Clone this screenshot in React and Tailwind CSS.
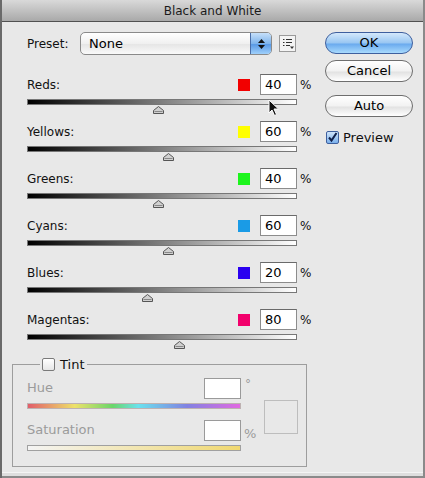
import { useState } from 'react'

const channels = [
  { name: 'Reds:', color: 'bg-[#f20000]', value: 40 },
  { name: 'Yellows:', color: 'bg-[#ffff00]', value: 60 },
  { name: 'Greens:', color: 'bg-[#1cf51c]', value: 40 },
  { name: 'Cyans:', color: 'bg-[#1a9be6]', value: 60 },
  { name: 'Blues:', color: 'bg-[#2a00f0]', value: 20 },
  { name: 'Magentas:', color: 'bg-[#f2006c]', value: 80 },
]

const Thumb = ({ pct }) => (
  <svg
    className="absolute top-[6px]"
    style={{ left: `${pct * 270 - 5}px` }}
    width="11"
    height="8"
    viewBox="0 0 11 8"
  >
    <path d="M5.5 0.5 L10.5 4.5 L10.5 7.5 L0.5 7.5 L0.5 4.5 Z" fill="#d0d0d0" stroke="#555" strokeWidth="1" />
    <path d="M1.5 5.5 L9.5 5.5" stroke="#888" strokeWidth="1" />
  </svg>
)

const ChannelRow = ({ channel }) => {
  const pct = (channel.value + 200) / 500
  return (
    <div className="mt-[16px] first:mt-0 w-[285px]">
      <div className="flex items-center h-[21px]">
        <span className="flex-1 text-[12px] text-[#111]">{channel.name}</span>
        <span className={`w-[12px] h-[12px] ${channel.color}`}></span>
        <div className="ml-[10px] w-[37px] h-[21px] bg-white border border-[#8c8c8c] border-t-[#6a6a6a] pl-[4px] text-[13px] leading-[19px] text-black">
          {channel.value}
        </div>
        <span className="ml-[3px] w-[12px] text-[12px] text-[#111]">%</span>
      </div>
      <div className="relative mt-[4px] w-[270px] h-[6px] border border-[#777] bg-[linear-gradient(to_right,#000,#fff)]">
        <Thumb pct={pct} />
      </div>
    </div>
  )
}

const MacButton = ({ children, primary }) => (
  <button
    className={`block w-[88px] h-[22px] rounded-full border text-[13px] leading-[20px] text-black ${
      primary
        ? 'border-[#3e5f9e] bg-[linear-gradient(to_bottom,#d4e8fb_0%,#98c6f2_50%,#6aaaee_55%,#a8dafd_100%)]'
        : 'border-[#6e6e6e] bg-[linear-gradient(to_bottom,#ffffff_0%,#f2f2f2_50%,#e2e2e2_55%,#ffffff_100%)]'
    }`}
  >
    {children}
  </button>
)

export default function App() {
  const [preview, setPreview] = useState(true)

  return (
    <div className="w-[425px] h-[478px] bg-[#e8e8e8] border-l-[2px] border-l-[#6a6a6a] border-r-[2px] border-r-[#8a8a8a] flex flex-col font-['DejaVu_Sans',sans-serif] relative overflow-hidden">
      {/* title bar */}
      <div className="h-[22px] shrink-0 flex items-center justify-center bg-[linear-gradient(to_bottom,#d9d9d9,#a9a9a9)] border-b border-[#515151] text-[12px] text-[#1a1a1a]">
        Black and White
      </div>

      <div className="flex flex-1">
        {/* left column */}
        <div className="w-[321px] shrink-0">
          {/* preset */}
          <div className="flex items-center h-[23px] mt-[10px] ml-[25px]">
            <span className="text-[12px] text-[#111] w-[53px]">Preset:</span>
            <div className="w-[192px] h-[23px] rounded-[5px] border border-[#8a8a8a] flex overflow-hidden bg-[linear-gradient(to_bottom,#ffffff,#f0f0f0_50%,#e6e6e6_55%,#fafafa)]">
              <span className="flex-1 pl-[8px] text-[13px] leading-[21px] text-black">None</span>
              <div className="w-[21px] h-full border-l border-[#4a6ea8] flex flex-col items-center justify-center gap-[2px] bg-[linear-gradient(to_bottom,#c6e0fa,#7fb4ec_50%,#5a9ae6_55%,#9fd0fb)]">
                <svg width="7" height="4" viewBox="0 0 7 4"><path d="M3.5 0 L7 4 L0 4 Z" fill="#111" /></svg>
                <svg width="7" height="4" viewBox="0 0 7 4"><path d="M0 0 L7 0 L3.5 4 Z" fill="#111" /></svg>
              </div>
            </div>
            <div className="ml-[7px] w-[17px] h-[17px] border border-[#9a9a9a] bg-[#f4f4f4] flex items-center justify-center">
              <svg width="12" height="11" viewBox="0 0 12 11">
                <path d="M1 1.5h1.5M4 1.5h6M1 4.5h1.5M4 4.5h6M1 7.5h1.5M4 7.5h4" stroke="#333" strokeWidth="1" />
                <path d="M8 8.5h4l-2 2.5z" fill="#333" />
              </svg>
            </div>
          </div>

          {/* channels */}
          <div className="mt-[19px] ml-[25px]">
            {channels.map((c) => (
              <ChannelRow key={c.name} channel={c} />
            ))}
          </div>

          {/* tint */}
          <fieldset className="mt-[15px] ml-[10px] w-[295px] h-[112px] border border-[#9d9d9d] pl-[14px] pt-[3px]">
            <legend className="ml-[13px] px-[2px] flex items-center gap-[5px] text-[13px] text-[#111]">
              <span className="w-[13px] h-[13px] border border-[#7a7a7a] rounded-[2px] bg-[linear-gradient(to_bottom,#fff,#e6e6e6)]"></span>
              Tint
            </legend>
            <div className="flex">
              <div className="w-[214px]">
                <div className="flex items-center h-[21px]">
                  <span className="flex-1 text-[13px] text-[#9b9b9b]">Hue</span>
                  <div className="w-[37px] h-[21px] bg-white border border-[#9a9a9a]"></div>
                </div>
                <div className="mt-[4px] h-[6px] border border-[#b0a0a0] opacity-75 bg-[linear-gradient(to_right,#e03040,#f0e040_22%,#40d040_40%,#40e0f0_52%,#6060e0_75%,#e040e0)]"></div>
                <div className="flex items-center h-[21px] mt-[11px]">
                  <span className="flex-1 text-[13px] text-[#9b9b9b]">Saturation</span>
                  <div className="w-[37px] h-[21px] bg-white border border-[#9a9a9a]"></div>
                </div>
                <div className="mt-[4px] h-[6px] border border-[#a0a0a0] bg-[linear-gradient(to_right,#f4f4f4,#f0d870)]"></div>
              </div>
              <div className="w-[22px]">
                <div className="ml-[4px] text-[12px] text-[#9b9b9b] leading-[12px]">°</div>
                <div className="mt-[34px] ml-[3px] text-[13px] text-[#9b9b9b]">%</div>
              </div>
              <div className="mt-[22px] ml-[1px] w-[34px] h-[34px] border border-[#bdbdbd]"></div>
            </div>
          </fieldset>
        </div>

        {/* right column */}
        <div className="flex flex-col pt-[10px] ml-[2px]">
          <MacButton primary>OK</MacButton>
          <div className="mt-[6px]"><MacButton>Cancel</MacButton></div>
          <div className="mt-[13px]"><MacButton>Auto</MacButton></div>
          <label className="mt-[11px] ml-[1px] flex items-center gap-[4px] text-[13px] text-[#111]" onClick={() => setPreview(!preview)}>
            <span className="w-[13px] h-[13px] border border-[#3e5f9e] rounded-[2px] bg-[linear-gradient(to_bottom,#cfe4fa,#7ab0ec)] flex items-center justify-center">
              {preview && (
                <svg width="11" height="11" viewBox="0 0 11 11"><path d="M2 5.5 L4.5 8.5 L9.5 1" stroke="#10204a" strokeWidth="2" fill="none" /></svg>
              )}
            </span>
            Preview
          </label>
        </div>
      </div>

      {/* bottom edge */}
      <div className="h-[6px] shrink-0 border-t border-[#f4f4f4] bg-[#dedede] border-b-[2px] border-b-[#8a8a8a]"></div>

      {/* mouse pointer */}
      <svg className="absolute left-[266px] top-[99px]" width="12" height="18" viewBox="0 0 12 18">
        <path d="M1 1 L1 14 L4 11 L6.5 16.5 L8.5 15.5 L6 10 L10.5 10 Z" fill="#111" stroke="#fff" strokeWidth="1" />
      </svg>
    </div>
  )
}
